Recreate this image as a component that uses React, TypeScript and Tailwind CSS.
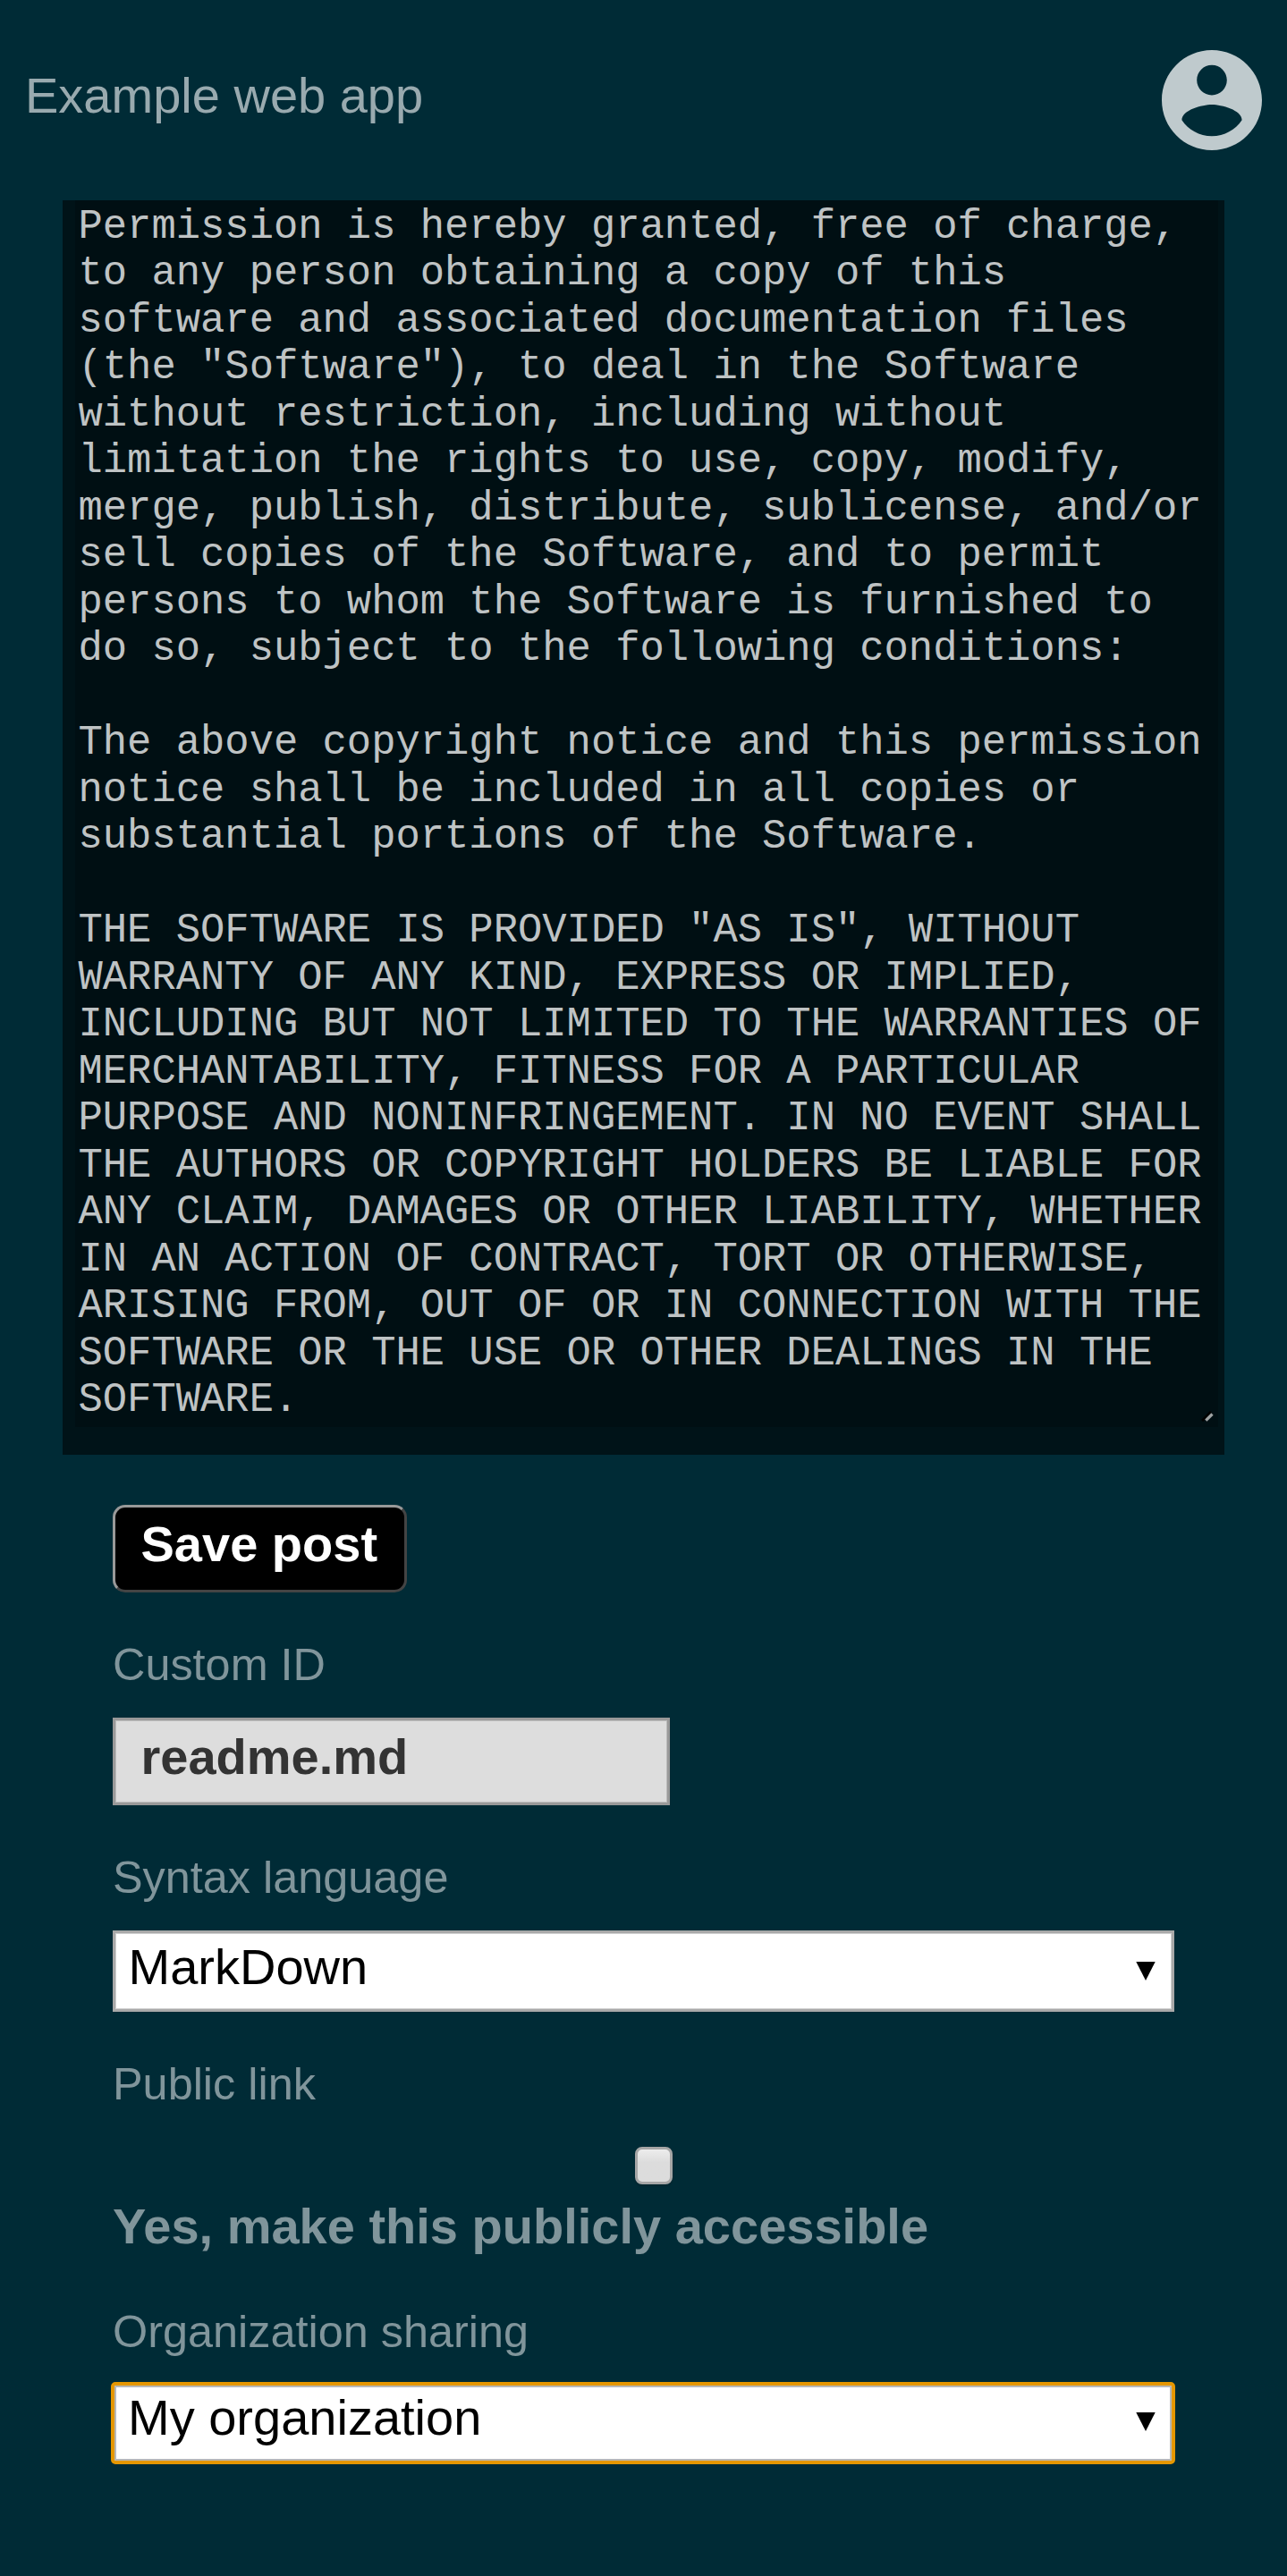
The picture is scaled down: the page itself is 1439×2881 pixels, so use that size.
import React from "react";

const LICENSE = `Permission is hereby granted, free of charge, to any person obtaining a copy of this software and associated documentation files (the "Software"), to deal in the Software without restriction, including without limitation the rights to use, copy, modify, merge, publish, distribute, sublicense, and/or sell copies of the Software, and to permit persons to whom the Software is furnished to do so, subject to the following conditions:

The above copyright notice and this permission notice shall be included in all copies or substantial portions of the Software.

THE SOFTWARE IS PROVIDED "AS IS", WITHOUT WARRANTY OF ANY KIND, EXPRESS OR IMPLIED, INCLUDING BUT NOT LIMITED TO THE WARRANTIES OF MERCHANTABILITY, FITNESS FOR A PARTICULAR PURPOSE AND NONINFRINGEMENT. IN NO EVENT SHALL THE AUTHORS OR COPYRIGHT HOLDERS BE LIABLE FOR ANY CLAIM, DAMAGES OR OTHER LIABILITY, WHETHER IN AN ACTION OF CONTRACT, TORT OR OTHERWISE, ARISING FROM, OUT OF OR IN CONNECTION WITH THE SOFTWARE OR THE USE OR OTHER DEALINGS IN THE SOFTWARE.`;

function Label({ children }: { children: React.ReactNode }) {
  return <div className="h-[60px] text-[50.4px] leading-[60px] whitespace-nowrap text-[#80959b]">{children}</div>;
}

function Arrow() {
  return (
    <svg viewBox="0 0 22 21" className="h-[21px] w-[22px] shrink-0" aria-hidden="true">
      <path d="M0.3 0H21.7L11 21Z" fill="#000" />
    </svg>
  );
}

function Header() {
  return (
    <header className="flex h-[224px] items-start justify-between pr-[28.5px] pl-7">
      <h1 className="mt-[74.5px] text-[56px] leading-[64px] text-[#99aaaf]">Example web app</h1>
      <svg viewBox="2 2 20 20" className="mt-14 h-28 w-28" fill="#bfcacd" aria-label="Account">
        <path d="M12 2C6.48 2 2 6.48 2 12s4.48 10 10 10 10-4.48 10-10S17.52 2 12 2zm0 3c1.66 0 3 1.34 3 3s-1.34 3-3 3-3-1.34-3-3 1.34-3 3-3zm0 14.2c-2.5 0-4.71-1.28-6-3.22.03-1.99 4-3.08 6-3.08 1.99 0 5.97 1.09 6 3.08-1.29 1.94-3.5 3.22-6 3.22z" />
      </svg>
    </header>
  );
}

function Editor() {
  return (
    <div className="relative ml-[70px] h-[1403px] w-[1299px] bg-[#001318] pl-[14px]">
      <textarea
        readOnly
        value={LICENSE}
        className="block h-[1372px] w-[1278px] resize-none overflow-hidden bg-[#000f13] pt-[3.5px] pr-[3px] pl-[3.5px] font-['Liberation_Mono',monospace] text-[45.5px] leading-[52.5px] text-[#bfc3c4] outline-none"
      />
      <svg viewBox="0 0 14 14" className="absolute top-[1353px] left-[1273px] h-[14px] w-[14px]" aria-hidden="true">
        <path d="M1 12L11 2" stroke="#000" strokeWidth="3" />
        <path d="M5.3 11.7L12.5 4.5" stroke="#9fa3a4" strokeWidth="3.2" />
      </svg>
    </div>
  );
}

export default function App() {
  return (
    <main className="h-[2881px] w-[1439px] overflow-hidden bg-[#002b36] font-['Liberation_Sans',Arial,sans-serif]">
      <Header />
      <Editor />
      <section className="flex flex-col items-start pt-14 pl-[126px]">
        <button className="h-[98px] w-[329px] rounded-[14px] border-[3px] border-t-[#999] border-r-[#444] border-b-[#444] border-l-[#999] bg-black pl-[28.5px] text-left text-[56px] leading-[64px] font-bold whitespace-nowrap text-white">
          <span className="block -mt-[10.5px]">Save post</span>
        </button>

        <div className="mt-[51px]">
          <Label>Custom ID</Label>
        </div>
        <input
          readOnly
          value="readme.md"
          className="mt-[29px] h-[98px] w-[623px] border-[3px] border-[#999] bg-[#ddd] pb-[12px] pl-[28.5px] text-[56px] leading-[64px] font-bold text-[#333] shadow-[inset_0_0_0_1px_#bbb] outline-none"
        />

        <div className="mt-[51px]">
          <Label>Syntax language</Label>
        </div>
        <div className="mt-[29px] flex h-[91px] w-[1187px] items-start justify-between border-[3px] border-[#a9a9a9] bg-white pr-[18px] pl-[14.5px] text-black shadow-[inset_0_0_0_1px_#d0d0d0]">
          <span className="mt-[6px] text-[56px] leading-[64px]">MarkDown</span>
          <span className="mt-8">
            <Arrow />
          </span>
        </div>

        <div className="mt-[51px]">
          <Label>Public link</Label>
        </div>
        <div className="mt-[40px] ml-[584px] h-[42px] w-[42px] rounded-[8px] border-[3.5px] border-[#a6a6a6] bg-linear-to-b from-[#ededed] to-[#dcdcdc] to-40% shadow-[0_2px_2px_rgba(0,0,0,0.12)]" />
        <div className="mt-[14.5px] text-[56px] leading-[64px] font-bold whitespace-nowrap text-[#80959b]">
          Yes, make this publicly accessible
        </div>

        <div className="mt-[56.5px]">
          <Label>Organization sharing</Label>
        </div>
        <div className="mt-[26px] -ml-[2px] flex h-[92px] w-[1190px] items-start justify-between rounded-[5px] border-4 border-[#e59700] bg-white pr-[18px] pl-[15px] text-black shadow-[inset_0_0_0_2px_#b8b8b8]">
          <span className="mt-[3.5px] text-[56px] leading-[64px]">My organization</span>
          <span className="mt-[30px]">
            <Arrow />
          </span>
        </div>
      </section>
    </main>
  );
}
